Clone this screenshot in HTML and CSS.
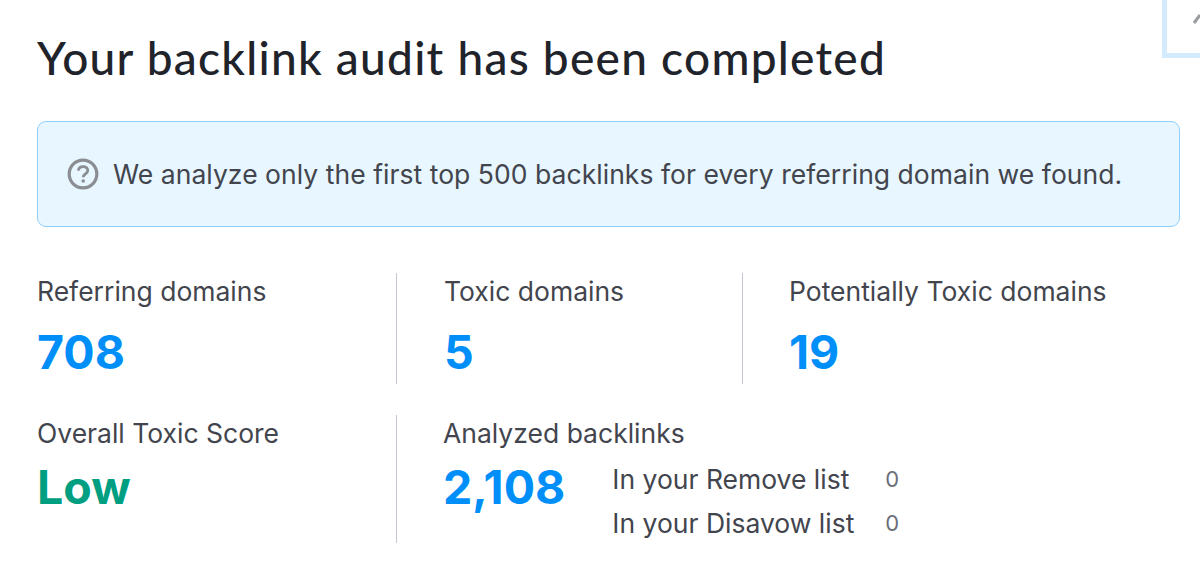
FILE: index.html
```html
<!DOCTYPE html>
<html lang="en">
<head>
<meta charset="utf-8">
<title>Backlink audit</title>
<link rel="stylesheet" href="styles.css">
</head>
<body>
<main class="page">
  <h1 class="title">Your backlink audit has been completed</h1>
  <div class="notice">
    <svg class="notice-icon" viewBox="0 0 32 32" width="34" height="34" aria-hidden="true">
      <circle cx="16" cy="16" r="13" fill="none" stroke="#8a8d92" stroke-width="3"/>
      <path d="M11.6 12.8c.3-2.4 2.2-3.8 4.5-3.8 2.5 0 4.4 1.5 4.4 3.7 0 3.2-4.3 3.2-4.3 6.3" fill="none" stroke="#8a8d92" stroke-width="2.6"/>
      <circle cx="16.2" cy="22.6" r="1.7" fill="#8a8d92"/>
    </svg>
    <span>We analyze only the first top 500 backlinks for every referring domain we found.</span>
  </div>
  <section class="stats">
    <div class="stat col-1">
      <div class="label">Referring domains</div>
      <div class="value">708</div>
    </div>
    <div class="stat col-2 ruled">
      <div class="label">Toxic domains</div>
      <div class="value">5</div>
    </div>
    <div class="stat col-3 ruled">
      <div class="label">Potentially Toxic domains</div>
      <div class="value">19</div>
    </div>
    <div class="stat col-1 lower">
      <div class="label">Overall Toxic Score</div>
      <div class="value green">Low</div>
    </div>
    <div class="stat col-wide ruled lower">
      <div class="label">Analyzed backlinks</div>
      <div class="analyzed">
        <div class="value">2,108</div>
        <dl class="lists">
          <dt>In your Remove list</dt><dd>0</dd>
          <dt>In your Disavow list</dt><dd>0</dd>
        </dl>
      </div>
    </div>
  </section>
</main>
<div class="corner" aria-hidden="true">
  <svg viewBox="0 0 12 14" width="12" height="14"><path d="M1 11 L7 3" stroke="#9a9ca0" stroke-width="3" fill="none"/></svg>
</div>
</body>
</html>
```
FILE: styles.css
```css
* { box-sizing: border-box; }
html, body { margin: 0; padding: 0; background: #fff; }
body { width: 1200px; height: 587px; overflow: hidden; position: relative; font-family: Inter, "Liberation Sans", sans-serif; color: #42454d; }
.page { padding: 30px 20px 0 37px; }
.title { margin: 0; font-family: Lato, "Noto Sans", sans-serif; font-weight: 500; font-size: 46px; line-height: 56px; color: #21232b; letter-spacing: 1.27px; }
.notice { margin-top: 35px; height: 106px; display: flex; align-items: center; gap: 13px; padding-left: 28px; background: #e7f6ff; border: 1px solid #8fd0ff; border-radius: 9px; font-size: 26.5px; letter-spacing: 0.04px; }
.notice-icon { flex: none; }
.stats { margin-top: 46px; display: grid; grid-template-columns: 359px 346px 1fr; }
.stat { min-height: 111px; }
.ruled { border-left: 1px solid #c3c8d0; }
.col-2 { padding-left: 47px; }
.col-3 { padding-left: 46px; }
.col-wide { grid-column: 2 / 4; padding-left: 46px; }
.lower { margin-top: 31px; min-height: 128px; }
.label { font-size: 26.5px; line-height: 36px; }
.value { font-size: 46.5px; font-weight: 700; line-height: 56px; margin-top: 15px; color: #008ff8; }
.green { margin-top: 8px; color: #009f81; }
.analyzed { display: flex; gap: 47px; margin-top: 8px; }
.analyzed .value { margin-top: 0; }
.lists { margin: 0; padding-top: 2px; display: grid; grid-template-columns: auto auto; column-gap: 31px; row-gap: 8px; align-content: start; font-size: 26.5px; line-height: 36px; }
.lists dt { margin: 0; }
.lists dd { margin: 0; color: #6c6e79; font-size: 22px; }
.corner { position: absolute; top: -6px; right: -2px; width: 40px; height: 64px; border: 5px solid #d4ebfd; border-top: 0; border-right: 0; }
.corner svg { position: absolute; top: 18px; left: 26px; }
```
